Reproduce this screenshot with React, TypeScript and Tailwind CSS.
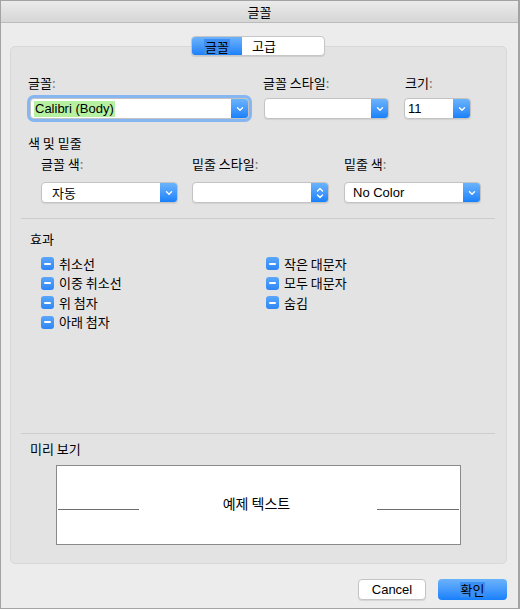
import React from 'react';

const KR = { fontFamily: '"Noto Sans CJK KR", "Liberation Sans", sans-serif' };

// Small white chevron used on the popup buttons
const Chevron = () => (
  <svg width="8" height="6" viewBox="0 0 8 6" fill="none">
    <path d="M1.5 1.8 L4 4.2 L6.5 1.8" stroke="white" strokeWidth="1.4" strokeLinecap="round" strokeLinejoin="round" />
  </svg>
);

const Stepper = () => (
  <svg width="8" height="14" viewBox="0 0 8 14" fill="none">
    <path d="M1.5 5 L4 2.5 L6.5 5" stroke="white" strokeWidth="1.4" strokeLinecap="round" strokeLinejoin="round" />
    <path d="M1.5 9 L4 11.5 L6.5 9" stroke="white" strokeWidth="1.4" strokeLinecap="round" strokeLinejoin="round" />
  </svg>
);

type SelectProps = { className: string; children?: React.ReactNode; stepper?: boolean; focus?: boolean };

const Select: React.FC<SelectProps> = ({ className, children, stepper, focus }) => (
  <div
    className={`flex h-[21px] rounded-[4px] border border-[#c3c3c3] bg-white overflow-hidden shadow-[0_1px_1px_rgba(0,0,0,0.08)] ${
      focus ? 'ring-[3px] ring-[#86b6f2]' : ''
    } ${className}`}
  >
    <div className="flex-1 flex items-center pl-[3px] text-[13px] text-black overflow-hidden">{children}</div>
    <div className="w-[17px] flex items-center justify-center bg-gradient-to-b from-[#6ab3fb] to-[#1681fb]">
      {stepper ? <Stepper /> : <Chevron />}
    </div>
  </div>
);

const Check: React.FC<{ label: string }> = ({ label }) => (
  <div className="flex items-center h-[19.5px]">
    <div className="w-[13px] h-[13px] rounded-[3px] bg-gradient-to-b from-[#5aa6fa] to-[#2c86f6] flex items-center justify-center">
      <div className="w-[7px] h-[2px] bg-white rounded-[1px]" />
    </div>
    <span className="ml-[5px] text-[13px] leading-[16px] text-black" style={KR}>
      {label}
    </span>
  </div>
);

export default function App() {
  return (
    <div
      className="w-[520px] h-[609px] box-border border border-[#a3a3a3] border-r-2 bg-[#ececec] flex flex-col"
      style={KR}
    >
      {/* title bar */}
      <div className="h-[22px] shrink-0 flex items-center justify-center border-b border-[#bcbcbc] bg-gradient-to-b from-[#ebebeb] to-[#d6d6d6] text-[13px] text-black">
        글꼴
      </div>

      {/* tabs */}
      <div className="relative z-10 flex justify-center mt-[13px] pr-[3px]">
        <div className="flex h-[20px] rounded-[4px] border border-[#c6c6c6] bg-white overflow-hidden shadow-[0_1px_1px_rgba(0,0,0,0.1)] text-[13px]">
          <div className="w-[50px] flex items-center justify-center bg-gradient-to-b from-[#6cb2fb] to-[#1a80fc]">
            <span className="bg-[#3d8ef0] px-[1px] leading-[15px] text-black">글꼴</span>
          </div>
          <div className="w-[82px] flex items-center pl-[10px] text-black">고급</div>
        </div>
      </div>

      {/* panel */}
      <div className="-mt-[10px] ml-[9px] mr-[11px] rounded-[5px] border border-[#d8d8d8] bg-[#e3e3e3] pt-[28px] pb-[18px]">
        <div className="flex pl-[17px]">
          <div className="w-[235px]">
            <div className="text-[13px] leading-[16px] text-black">
              글꼴<span className="text-[#777]">:</span>
            </div>
            <Select className="mt-[7px] ml-[2px] w-[219px]" focus>
              <span className="bg-[#b7f0a0] leading-[16px] px-[1px]" style={{ fontFamily: '"Liberation Sans", sans-serif' }}>
                Calibri (Body)
              </span>
            </Select>
          </div>
          <div className="w-[141px]">
            <div className="text-[13px] leading-[16px] text-black">
              글꼴 스타일<span className="text-[#777]">:</span>
            </div>
            <Select className="mt-[7px] ml-px w-[125px]" />
          </div>
          <div>
            <div className="text-[13px] leading-[16px] text-black ml-px">
              크기<span className="text-[#777]">:</span>
            </div>
            <Select className="mt-[7px] w-[67px]">
              <span style={{ fontFamily: '"Liberation Sans", sans-serif' }}>11</span>
            </Select>
          </div>
        </div>

        <div className="mt-[16px] pl-[17px] text-[13px] leading-[16px] text-black">색 및 밑줄</div>
        <div className="flex pl-[30px] mt-[5px]">
          <div className="w-[151px]">
            <div className="text-[13px] leading-[16px] text-black">
              글꼴 색<span className="text-[#777]">:</span>
            </div>
            <Select className="mt-[10px] w-[137px]">
              <span className="pl-[7px]">자동</span>
            </Select>
          </div>
          <div className="w-[152px]">
            <div className="text-[13px] leading-[16px] text-black">
              밑줄 스타일<span className="text-[#777]">:</span>
            </div>
            <Select className="mt-[10px] w-[137px]" stepper />
          </div>
          <div>
            <div className="text-[13px] leading-[16px] text-black">
              밑줄 색<span className="text-[#777]">:</span>
            </div>
            <Select className="mt-[10px] w-[137px]">
              <span className="pl-[5px]" style={{ fontFamily: '"Liberation Sans", sans-serif' }}>
                No Color
              </span>
            </Select>
          </div>
        </div>

        <div className="mt-[15px] ml-[10px] mr-[11px] h-px bg-[#cdcdcd]" />

        <div className="mt-[12px] pl-[19px] text-[13px] leading-[16px] text-black">효과</div>
        <div className="mt-[7px] pl-[30px] flex">
          <div className="w-[225px]">
            <Check label="취소선" />
            <Check label="이중 취소선" />
            <Check label="위 첨자" />
            <Check label="아래 첨자" />
          </div>
          <div>
            <Check label="작은 대문자" />
            <Check label="모두 대문자" />
            <Check label="숨김" />
          </div>
        </div>

        <div className="mt-[101px] ml-[10px] mr-[11px] h-px bg-[#cdcdcd]" />

        <div className="mt-[7px] pl-[19px] text-[13px] leading-[16px] text-black">미리 보기</div>
        <div className="mt-[8px] ml-[45px] w-[405px] h-[80px] border border-[#8a8a8a] bg-white flex items-end pb-[34px] px-px">
          <div className="w-[81px] h-px bg-[#6e6e6e]" />
          <div className="flex-1 text-center text-[14px] leading-[16px] text-black mb-[-1px] pr-[3px]">예제 텍스트</div>
          <div className="w-[82px] h-px bg-[#6e6e6e]" />
        </div>
      </div>

      {/* buttons */}
      <div className="mt-[15px] flex justify-end gap-[12px] mr-[11px]">
        <div
          className="w-[68px] h-[21px] rounded-[4px] border border-[#c4c4c4] bg-white flex items-center justify-center text-[13px] text-black shadow-[0_1px_1px_rgba(0,0,0,0.1)]"
          style={{ fontFamily: '"Liberation Sans", sans-serif' }}
        >
          Cancel
        </div>
        <div className="w-[69px] h-[21px] rounded-[4px] bg-gradient-to-b from-[#6ab2fb] to-[#1580fb] flex items-center justify-center text-[13px]">
          <span className="bg-[#3c8ff0] leading-[15px] px-[1px] text-black">확인</span>
        </div>
      </div>
    </div>
  );
}
